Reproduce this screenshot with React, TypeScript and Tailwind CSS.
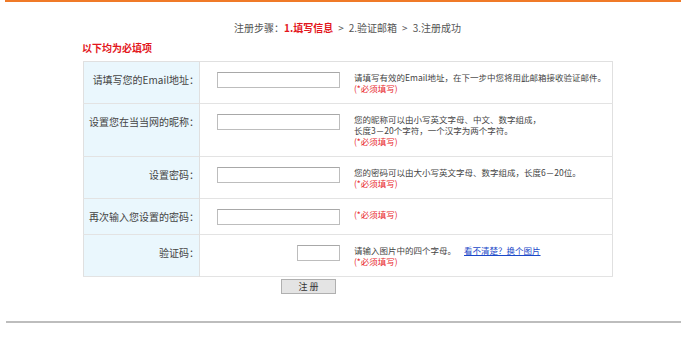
import React from "react";

type Row = {
  label: string;
  small?: boolean;
  desc: React.ReactNode[];
};

const Req = () => <span className="text-[#e8262a]">(*必须填写)</span>;

const rows: Row[] = [
  {
    label: "请填写您的Email地址：",
    desc: ["请填写有效的Email地址，在下一步中您将用此邮箱接收验证邮件。", <Req key="r" />],
  },
  {
    label: "设置您在当当网的昵称：",
    desc: [
      "您的昵称可以由小写英文字母、中文、数字组成，",
      "长度3－20个字符，一个汉字为两个字符。",
      <Req key="r" />,
    ],
  },
  {
    label: "设置密码：",
    desc: ["您的密码可以由大小写英文字母、数字组成，长度6－20位。", <Req key="r" />],
  },
  {
    label: "再次输入您设置的密码：",
    desc: [<Req key="r" />],
  },
  {
    label: "验证码：",
    small: true,
    desc: [
      <span key="a">
        请输入图片中的四个字母。
        <a href="#" className="ml-[8px] text-[#1a48c8] underline">
          看不清楚？换个图片
        </a>
      </span>,
      <Req key="r" />,
    ],
  },
];

const App: React.FC = () => {
  return (
    <div className="w-[681px] h-[340px] bg-white font-['Noto_Sans_CJK_SC',sans-serif] text-[#444]">
      {/* top orange rule */}
      <div className="ml-[5px] h-[2px] bg-[#f07a28]" />

      {/* steps */}
      <div className="pt-[19px] text-center text-[10px] leading-[14px] text-[#555] pl-[14px]">
        注册步骤：<span className="font-bold text-[#e3161c]">1.填写信息</span>
        <span className="mx-[5px]">&gt;</span>2.验证邮箱<span className="mx-[5px]">&gt;</span>3.注册成功
      </div>

      <div className="ml-[83px] w-[530px]">
        <div className="mt-[6px] text-[10px] leading-[14px] font-bold text-[#e3161c] -ml-[1px]">以下均为必填项</div>

        <table className="mt-[6px] w-full border-collapse border border-[#e0e0e0]">
          <tbody>
            {rows.map((r, i) => (
              <tr key={i} className="border-b border-[#e3e3e3]">
                <td className="w-[116px] bg-[#eaf7fd] border-r border-[#e0e0e0] align-top pt-[10px] pb-[9px] pr-0 text-right text-[10px] leading-[15px] text-[#444] whitespace-nowrap">
                  {r.label}
                </td>
                <td className="align-top pt-[10px] pb-[9px] pl-[17px]">
                  <div className="flex items-start gap-[14px]">
                    <div className="w-[123px] flex justify-end shrink-0">
                      <input
                        className={`${r.small ? "w-[43px]" : "w-[123px]"} h-[16px] border border-[#bdbdbd] border-t-[#a8a8a8] bg-white outline-none`}
                      />
                    </div>
                    <div className="text-[8.5px] leading-[11px] text-[#444] whitespace-nowrap">
                      {r.desc.map((d, j) => (
                        <div key={j}>{d}</div>
                      ))}
                    </div>
                  </div>
                </td>
              </tr>
            ))}
          </tbody>
        </table>

        <div className="mt-[2px] pl-[198px] flex">
          <button className="w-[55px] h-[15px] bg-[#e4e4e4] border border-[#b0b0b0] text-[9px] leading-[13px] text-[#333]">
            注 册
          </button>
        </div>
      </div>

      {/* bottom rule */}
      <div className="mt-[27px] ml-[6px] h-[2px] bg-[#bdbdbd]" />
    </div>
  );
};

export default App;
